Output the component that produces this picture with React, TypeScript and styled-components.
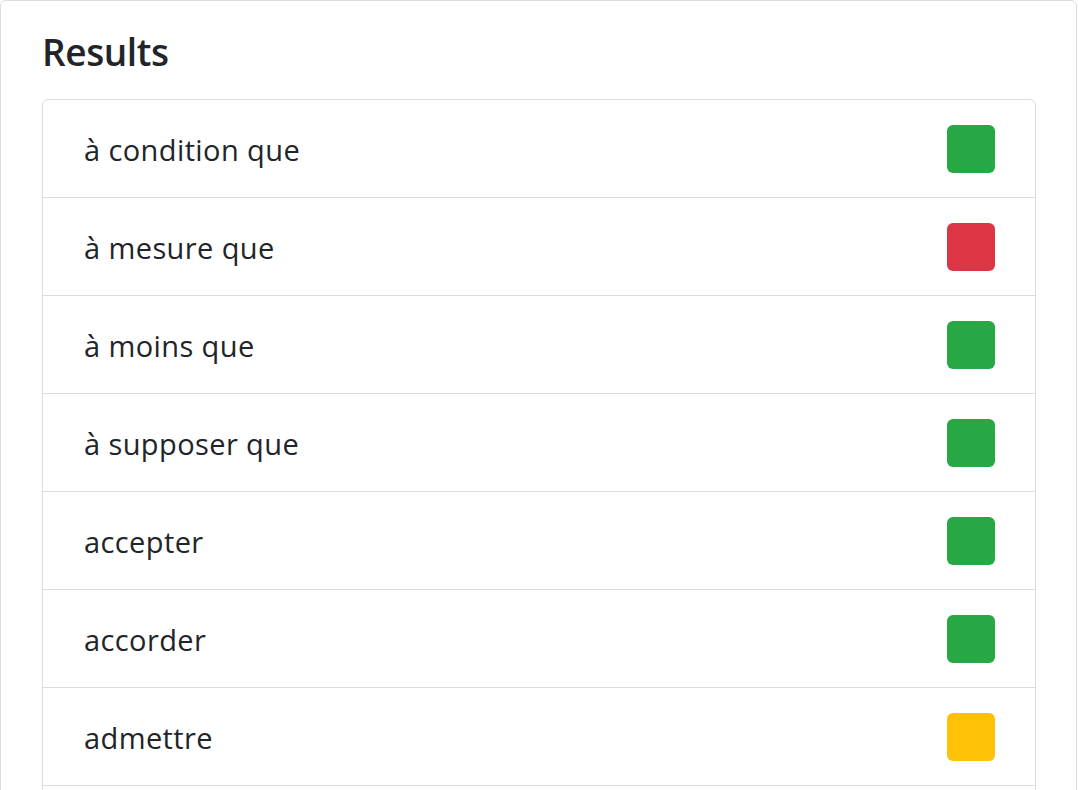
import React from "react";
import styled, { createGlobalStyle } from "styled-components";

const Global = createGlobalStyle`
  html, body { margin: 0; padding: 0; background: #fff; }
  body { font-family: "Open Sans", "Noto Sans", "Liberation Sans", sans-serif; color: #212529; }
`;

const Card = styled.div`
  box-sizing: border-box;
  width: 1077px;
  border: 1px solid #dcdcdc;
  border-radius: 6px;
  padding: 25px 40px 0 41px;
  background: #fff;
`;

const Title = styled.h3`
  margin: 0 0 21px 0;
  font-size: 37px;
  font-weight: 600;
  line-height: 52px;
  letter-spacing: -0.4px;
`;

const List = styled.ul`
  list-style: none;
  margin: 0;
  padding: 0;
  border: 1px solid #dcdcdc;
  border-radius: 6px;
  overflow: hidden;
`;

const Row = styled.li`
  display: flex;
  align-items: center;
  justify-content: space-between;
  height: 98px;
  box-sizing: border-box;
  padding: 0 40px 0 41px;
  border-top: 1px solid #dcdcdc;
  &:first-child { border-top: none; height: 97px; }
  font-size: 29px;
  letter-spacing: 0.4px;
  line-height: 1;
`;

const Label = styled.span`
  padding-top: 2px;
`;

const colors = { ok: "#28a745", bad: "#dc3545", warn: "#ffc107" } as const;

const Status = styled.span<{ $kind: keyof typeof colors }>`
  width: 48px;
  height: 48px;
  border-radius: 6px;
  background: ${(p) => colors[p.$kind]};
  flex: none;
`;

const items: { text: string; kind: keyof typeof colors }[] = [
  { text: "à condition que", kind: "ok" },
  { text: "à mesure que", kind: "bad" },
  { text: "à moins que", kind: "ok" },
  { text: "à supposer que", kind: "ok" },
  { text: "accepter", kind: "ok" },
  { text: "accorder", kind: "ok" },
  { text: "admettre", kind: "warn" },
  { text: "afin que", kind: "ok" },
  { text: "aimer", kind: "ok" },
];

export default function App() {
  return (
    <>
      <Global />
      <Card>
        <Title>Results</Title>
        <List>
          {items.map((it) => (
            <Row key={it.text}>
              <Label>{it.text}</Label>
              <Status $kind={it.kind} />
            </Row>
          ))}
        </List>
      </Card>
    </>
  );
}
